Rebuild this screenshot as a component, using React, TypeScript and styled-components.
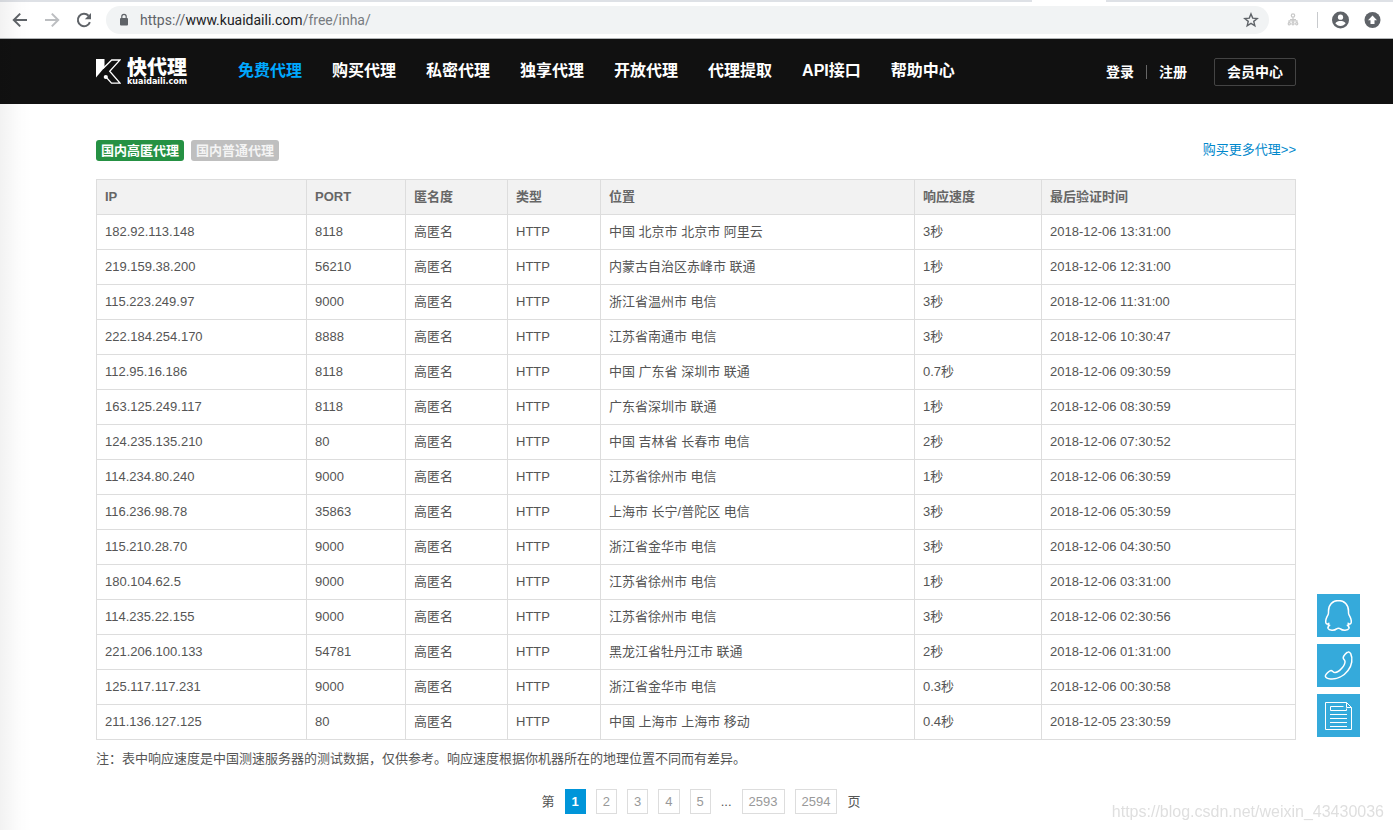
import React from "react";
import styled, { createGlobalStyle } from "styled-components";

const SANS = '"Liberation Sans", "Noto Sans CJK SC", sans-serif';

const GlobalStyle = createGlobalStyle`
  *, *::before, *::after { box-sizing: border-box; }
  body {
    margin: 0;
    background: #fff;
    color: #555;
    font: 13px/20px ${SANS};
  }
  a { color: inherit; text-decoration: none; }
  button { font: inherit; cursor: pointer; }
`;

const Page = styled.div`
  position: relative;
  min-height: 100vh;
`;

const EdgeShade = styled.div`
  position: absolute;
  inset: 0 auto 0 0;
  width: 32px;
  background: linear-gradient(to right, rgba(0, 0, 0, 0.05), rgba(0, 0, 0, 0.01) 60%, rgba(0, 0, 0, 0));
  pointer-events: none;
`;

/* Browser chrome */

const TabStrip = styled.div`
  display: flex;
  justify-content: flex-end;
  height: 2px;
  padding-right: 287px;
  background: #dee1e6;
`;

const ActiveTab = styled.div`
  width: 74px;
  height: 2px;
  background: #fff;
`;

const Toolbar = styled.div`
  display: flex;
  align-items: center;
  height: 37px;
  padding: 0 12px 0 11px;
  background: #fff;
  border-bottom: 1px solid #b0b3b5;
`;

const IconButton = styled.button<{ $gap?: number; $color?: string }>`
  display: flex;
  flex: none;
  margin: 0 ${(p) => p.$gap ?? 0}px 0 0;
  padding: 0;
  border: 0;
  background: none;
  color: ${(p) => p.$color ?? "#5f6368"};
`;

const AddressBar = styled.div`
  display: flex;
  flex: 1;
  align-items: center;
  height: 28px;
  margin-right: 15px;
  padding: 0 9px 0 12px;
  border-radius: 14px;
  background: #f1f3f4;
`;

const AddressText = styled.a`
  flex: 1;
  margin-left: 10px;
  color: #777b80;
  font: 14px/20px Roboto, sans-serif;
`;

const Scheme = styled.span`
  color: #5f6368;
`;

const Host = styled.span`
  color: #202124;
`;

const ToolbarRule = styled.span`
  width: 1px;
  height: 16px;
  margin-right: 14px;
  background: #c8cacd;
`;

/* Site header */

const Header = styled.header`
  background: #111;
  color: #fff;
`;

const HeaderInner = styled.div`
  display: flex;
  align-items: center;
  height: 65px;
  padding: 0 97px 2px 96px;
`;

const Logo = styled.a`
  display: flex;
  align-items: center;
  gap: 6px;
  margin-right: 50px;
  padding-top: 3px;
`;

const LogoText = styled.span`
  display: flex;
  flex-direction: column;
  width: 61px;
  white-space: nowrap;
`;

const LogoName = styled.span`
  font: 900 20px/20px ${SANS};
`;

const LogoDomain = styled.span`
  font: bold 8px/8px "DejaVu Sans", sans-serif;
`;

const Nav = styled.nav`
  display: flex;
  flex: 1;
  gap: 30px;
`;

const NavLink = styled.a<{ $active?: boolean }>`
  color: ${(p) => (p.$active ? "#00a8ff" : "#fff")};
  font-size: 16px;
  font-weight: bold;
  line-height: 24px;
  white-space: nowrap;
`;

const Account = styled.div`
  display: flex;
  align-items: center;
  padding-top: 2px;
  font-size: 14px;
  font-weight: bold;
`;

const AccountRule = styled.span`
  width: 1px;
  height: 14px;
  margin: 0 12px;
  background: #666;
`;

const MemberButton = styled.button`
  height: 28px;
  margin-left: 27px;
  padding: 0 12px;
  border: 1px solid #444;
  border-radius: 2px;
  background: none;
  color: #fff;
  line-height: 26px;
`;

/* Proxy list */

const Main = styled.main`
  padding: 36px 97px 0 96px;
`;

const ListBar = styled.div`
  display: flex;
  align-items: flex-start;
  gap: 7px;
  margin-bottom: 18px;
`;

const Badge = styled.a<{ $active?: boolean }>`
  padding: 0 5px;
  border-radius: 3px;
  background: ${(p) => (p.$active ? "#259143" : "#bfbfbf")};
  color: ${(p) => (p.$active ? "#fff" : "#f4f4f4")};
  font-weight: bold;
  line-height: 21px;
`;

const MoreLink = styled.a`
  margin-left: auto;
  color: #0088cc;
`;

const Table = styled.table`
  width: 100%;
  border-collapse: collapse;
  table-layout: fixed;
`;

const Col = styled.col<{ $w?: number }>`
  width: ${(p) => (p.$w ? `${p.$w}px` : "auto")};
`;

const Cell = styled.td`
  height: 35px;
  padding: 0 8px;
  border: 1px solid #ddd;
  text-align: left;
  line-height: 20px;
`;

const HeadCell = styled(Cell).attrs({ as: "th", scope: "col" })`
  background: #f2f2f2;
  color: #666;
  font-weight: bold;
`;

const Note = styled.p`
  margin: 9px 0 20px;
`;

const Pager = styled.nav`
  display: flex;
  align-items: center;
  justify-content: center;
  gap: 10px;
  padding-left: 10px;
`;

const PageLink = styled.a<{ $active?: boolean }>`
  padding: 0 6px;
  border: 1px solid ${(p) => (p.$active ? "#0095d9" : "#ddd")};
  background: ${(p) => (p.$active ? "#0095d9" : "#fff")};
  color: ${(p) => (p.$active ? "#fff" : "#999")};
  font-weight: ${(p) => (p.$active ? "bold" : "normal")};
  line-height: 23px;
`;

/* Floating items */

const SideTools = styled.aside`
  position: fixed;
  right: 33px;
  bottom: 93px;
  display: flex;
  flex-direction: column;
  gap: 7px;
`;

const SideButton = styled.button`
  display: block;
  width: 43px;
  height: 43px;
  padding: 0;
  border: 0;
  background: #35aadb;
`;

const Watermark = styled.div`
  position: fixed;
  right: 9px;
  bottom: 8px;
  color: #dfdfdf;
  font-size: 16px;
  line-height: 20px;
`;

const NAV = ["免费代理", "购买代理", "私密代理", "独享代理", "开放代理", "代理提取", "API接口", "帮助中心"];

const COLUMNS: { title: string; width?: number }[] = [
  { title: "IP", width: 210 },
  { title: "PORT", width: 99 },
  { title: "匿名度", width: 102 },
  { title: "类型", width: 93 },
  { title: "位置", width: 314 },
  { title: "响应速度", width: 127 },
  { title: "最后验证时间" },
];

const ROWS = [
  ["182.92.113.148", "8118", "中国 北京市 北京市 阿里云", "3秒", "2018-12-06 13:31:00"],
  ["219.159.38.200", "56210", "内蒙古自治区赤峰市 联通", "1秒", "2018-12-06 12:31:00"],
  ["115.223.249.97", "9000", "浙江省温州市 电信", "3秒", "2018-12-06 11:31:00"],
  ["222.184.254.170", "8888", "江苏省南通市 电信", "3秒", "2018-12-06 10:30:47"],
  ["112.95.16.186", "8118", "中国 广东省 深圳市 联通", "0.7秒", "2018-12-06 09:30:59"],
  ["163.125.249.117", "8118", "广东省深圳市 联通", "1秒", "2018-12-06 08:30:59"],
  ["124.235.135.210", "80", "中国 吉林省 长春市 电信", "2秒", "2018-12-06 07:30:52"],
  ["114.234.80.240", "9000", "江苏省徐州市 电信", "1秒", "2018-12-06 06:30:59"],
  ["116.236.98.78", "35863", "上海市 长宁/普陀区 电信", "3秒", "2018-12-06 05:30:59"],
  ["115.210.28.70", "9000", "浙江省金华市 电信", "3秒", "2018-12-06 04:30:50"],
  ["180.104.62.5", "9000", "江苏省徐州市 电信", "1秒", "2018-12-06 03:31:00"],
  ["114.235.22.155", "9000", "江苏省徐州市 电信", "3秒", "2018-12-06 02:30:56"],
  ["221.206.100.133", "54781", "黑龙江省牡丹江市 联通", "2秒", "2018-12-06 01:31:00"],
  ["125.117.117.231", "9000", "浙江省金华市 电信", "0.3秒", "2018-12-06 00:30:58"],
  ["211.136.127.125", "80", "中国 上海市 上海市 移动", "0.4秒", "2018-12-05 23:30:59"],
];

function BrowserBar() {
  return (
    <>
      <TabStrip><ActiveTab /></TabStrip>
      <Toolbar>
        <IconButton $gap={14} aria-label="后退">
          <svg width="18" height="18" viewBox="0 0 18 18" fill="none" stroke="currentColor" strokeWidth="2">
            <path d="M16 9H3M9.2 2.6 2.8 9l6.4 6.4" />
          </svg>
        </IconButton>
        <IconButton $gap={14} $color="#bcbec1" aria-label="前进">
          <svg width="18" height="18" viewBox="0 0 18 18" fill="none" stroke="currentColor" strokeWidth="2">
            <path d="M2 9h13M8.8 2.6 15.2 9l-6.4 6.4" />
          </svg>
        </IconButton>
        <IconButton $gap={13} aria-label="刷新">
          <svg width="18" height="18" viewBox="0 0 18 18" fill="none" stroke="currentColor" strokeWidth="2">
            <path d="M14.9 11.2A6.2 6.2 0 1 1 13.6 4.8" />
            <path d="M16 2v6.2H9.8z" fill="currentColor" stroke="none" />
          </svg>
        </IconButton>
        <AddressBar>
          <svg width="12" height="14" viewBox="0 0 12 14" fill="none">
            <rect x="2" y="5" width="8" height="7.500" rx="1" fill="#5f6368" />
            <path d="M3.800 5.500V3.600a2.200 2.200 0 0 1 4.400 0V5.500" stroke="#5f6368" strokeWidth="1.200" />
          </svg>
          <AddressText href="#">
            <Scheme>https://</Scheme><Host>www.kuaidaili.com</Host>/free/inha/
          </AddressText>
          <IconButton aria-label="收藏">
            <svg width="18" height="18" viewBox="0 0 18 18" fill="none" stroke="currentColor" strokeWidth="1.400">
              <path d="m9 2.900 1.700 4.200 4.500.35-3.450 2.900 1.080 4.400L9 12.400l-3.830 2.350 1.080-4.400L2.800 7.450l4.500-.35z" />
            </svg>
          </IconButton>
        </AddressBar>
        <IconButton $gap={15} $color="#c9c9c9" aria-label="扩展程序">
          <svg width="18" height="18" viewBox="0 0 18 18" fill="none" stroke="currentColor" strokeWidth="1.200">
            <circle cx="9" cy="4.500" r="1.700" />
            <path d="M9 6.200v6M6 8.500h6M5 12V9.800h8V12" />
            <circle cx="5.300" cy="12.800" r="1.100" />
            <circle cx="9" cy="12.800" r="1.100" />
            <circle cx="12.700" cy="12.800" r="1.100" />
          </svg>
        </IconButton>
        <ToolbarRule />
        <IconButton $gap={15} aria-label="用户">
          <svg width="17" height="18" viewBox="0 0 17 18">
            <circle cx="8.500" cy="9" r="8.500" fill="currentColor" />
            <circle cx="8.500" cy="6.200" r="2.600" fill="#fff" />
            <path d="M3.300 12.300c1-1.800 3.300-2.400 5.200-2.400s4.200.6 5.200 2.400c-1.200 1.600-3 2.700-5.200 2.700s-4-1.100-5.200-2.700z" fill="#fff" />
          </svg>
        </IconButton>
        <IconButton aria-label="更新">
          <svg width="17" height="18" viewBox="0 0 17 18">
            <circle cx="8.500" cy="9" r="8" fill="currentColor" />
            <path d="M8.500 4.500 13 9.200h-2.500V13h-4V9.200H4z" fill="#fff" />
          </svg>
        </IconButton>
      </Toolbar>
    </>
  );
}

function SiteHeader() {
  return (
    <Header>
      <HeaderInner>
        <Logo href="#" aria-label="快代理">
          <svg width="25" height="26" viewBox="0 0 25 26" fill="none">
            <path d="M0 0h8.500v8.500L0 18.500z" fill="#fff" />
            <path d="M7 9.500 15.700 1H24L13.700 12.200 24 24.200h-8.500L10 18" stroke="#fff" strokeWidth="1.300" />
            <circle cx="9.800" cy="18" r="2.100" fill="#fff" />
          </svg>
          <LogoText>
            <LogoName>快代理</LogoName>
            <LogoDomain>kuaidaili.com</LogoDomain>
          </LogoText>
        </Logo>
        <Nav>
          {NAV.map((label, i) => (
            <NavLink key={label} href="#" $active={i === 0}>{label}</NavLink>
          ))}
        </Nav>
        <Account>
          <a href="#">登录</a>
          <AccountRule />
          <a href="#">注册</a>
          <MemberButton>会员中心</MemberButton>
        </Account>
      </HeaderInner>
    </Header>
  );
}

function ProxyTable() {
  return (
    <Table>
      <colgroup>
        {COLUMNS.map((c) => <Col key={c.title} $w={c.width} />)}
      </colgroup>
      <thead>
        <tr>{COLUMNS.map((c) => <HeadCell key={c.title}>{c.title}</HeadCell>)}</tr>
      </thead>
      <tbody>
        {ROWS.map(([ip, port, place, speed, time]) => (
          <tr key={ip}>
            <Cell>{ip}</Cell>
            <Cell>{port}</Cell>
            <Cell>高匿名</Cell>
            <Cell>HTTP</Cell>
            <Cell>{place}</Cell>
            <Cell>{speed}</Cell>
            <Cell>{time}</Cell>
          </tr>
        ))}
      </tbody>
    </Table>
  );
}

export default function App() {
  return (
    <Page>
      <GlobalStyle />
      <BrowserBar />
      <SiteHeader />
      <Main>
        <ListBar>
          <Badge href="#" $active>国内高匿代理</Badge>
          <Badge href="#">国内普通代理</Badge>
          <MoreLink href="#">购买更多代理&gt;&gt;</MoreLink>
        </ListBar>
        <ProxyTable />
        <Note>注：表中响应速度是中国测速服务器的测试数据，仅供参考。响应速度根据你机器所在的地理位置不同而有差异。</Note>
        <Pager aria-label="分页">
          <span>第</span>
          {["1", "2", "3", "4", "5"].map((n) => (
            <PageLink key={n} href="#" $active={n === "1"}>{n}</PageLink>
          ))}
          <span>...</span>
          <PageLink href="#">2593</PageLink>
          <PageLink href="#">2594</PageLink>
          <span>页</span>
        </Pager>
      </Main>
      <SideTools>
        <SideButton aria-label="QQ客服">
          <svg width="43" height="43" viewBox="0 0 43 43" fill="none" stroke="#fff" strokeWidth="1.500" strokeLinejoin="round">
            <path d="M21.500 6.500c-6 0-10 4.500-10 10.500 0 1.500.2 2.600-.4 3.600-1.700 2.900-2.800 5.600-2.300 8 .3 1.500 1.500 1.800 3 .7l-.6 1.700c.6.300 1 .3 1.500.2-1.500 1.200-1.900 2.300-1.600 3.300.8 2 6.400 2.400 8.400.4.900-.6 3.100-.6 4 0 2 2 7.600 1.600 8.400-.4.300-1-.1-2.100-1.600-3.300.5.100.9.100 1.500-.2l-.6-1.700c1.500 1.100 2.700.8 3-.7.500-2.400-.6-5.100-2.300-8-.6-1-.4-2.100-.4-3.600 0-6-4-10.500-10-10.500z" />
          </svg>
        </SideButton>
        <SideButton aria-label="电话">
          <svg width="43" height="43" viewBox="0 0 43 43" fill="none" stroke="#fff" strokeWidth="1.500" strokeLinejoin="round">
            <path d="M31 8c1-.3 1.800.2 2.700 1.600C36 14.500 35 21.500 31 26.500c-4.500 6-11.500 9-17.500 8.500-3-.3-5-1.600-5.200-3-.1-1.300 4-5.400 5.700-5.500 1.700 0 2 2 4 2 2.500.1 5-2 7-4.400s3.200-4.700 3-6.700c-.2-1.800-2-2.200-1.800-3.800.2-1.700 3.300-5.200 4.800-5.600z" />
          </svg>
        </SideButton>
        <SideButton aria-label="反馈">
          <svg width="43" height="43" viewBox="0 0 43 43" fill="none" stroke="#fff">
            <path d="M29.500 8.500h-21v27h26v-22zM29.500 8.500v5h5" />
            <path d="M13.500 16.500v-4h13M13.500 16.500h16v-2M13 20.500h17M13 24.500h17M13 28.500h17M13 32.500h17" />
          </svg>
        </SideButton>
      </SideTools>
      <Watermark>https://blog.csdn.net/weixin_43430036</Watermark>
      <EdgeShade />
    </Page>
  );
}
